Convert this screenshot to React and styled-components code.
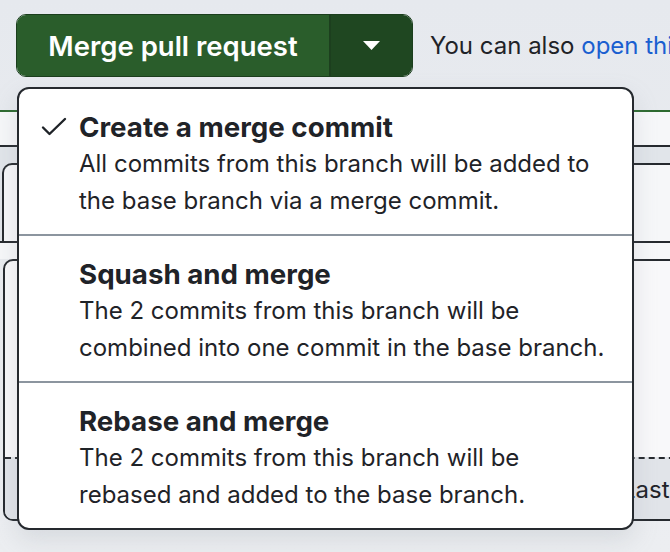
import React from 'react';
import styled, { createGlobalStyle } from 'styled-components';

const GlobalStyle = createGlobalStyle`
  html, body {
    margin: 0;
    padding: 0;
    background: #e7e9ed;
  }
  body {
    font-family: Inter, "Noto Sans", "Liberation Sans", sans-serif;
    color: #1f2328;
  }
`;

const Page = styled.div`
  position: relative;
  width: 670px;
  height: 552px;
  overflow: hidden;
  background: linear-gradient(180deg, #e6e9ee 0%, #eceef1 100%);
`;

const TopBar = styled.div`
  display: flex;
  align-items: center;
  gap: 17px;
  padding: 14px 0 0 16px;
  white-space: nowrap;
`;

const ButtonGroup = styled.div`
  display: flex;
  flex-shrink: 0;
  height: 63px;
  border: 1.5px solid #1b3e1d;
  border-radius: 10px;
  overflow: hidden;
  box-sizing: border-box;
`;

const MergeButton = styled.button`
  width: 314px;
  padding: 0;
  border: 0;
  border-right: 2px solid #1c3f1e;
  background: #2a5d2b;
  color: #ffffff;
  font-family: inherit;
  font-size: 27.5px;
  font-weight: 600;
`;

const CaretButton = styled.button`
  width: 81px;
  border: 0;
  background: #1f4721;
  display: flex;
  align-items: center;
  justify-content: center;
`;

const Hint = styled.span`
  font-size: 24px;
  color: #1f2328;
`;

const HintLink = styled.a`
  color: #1a5fd0;
  text-decoration: none;
`;

const MergeBox = styled.div`
  margin-top: 33px;
  border-top: 2px solid #2d6a30;
`;

const Strip = styled.div`
  height: 33px;
  background: #f6f7f9;
`;

const StatusBand = styled.div`
  height: 78px;
  background: #e1e5ea;
  border-top: 2px solid #25292e;
  border-bottom: 2px solid #25292e;
  padding-top: 16px;
`;

const InnerCard = styled.div`
  height: 100%;
  margin-left: 2px;
  border-left: 2px solid #25292e;
  border-top: 2px solid #25292e;
  border-top-left-radius: 10px;
  background: #f6f7f9;
  box-sizing: border-box;
`;

const Gap = styled.div`
  height: 16px;
  background: #f6f7f9;
`;

const OptionsCard = styled.div`
  margin-left: 3px;
  width: 700px;
  border: 2px solid #25292e;
  border-radius: 10px;
  overflow: hidden;
  background: #f8f8fa;
`;

const CardBody = styled.div`
  height: 196px;
`;

const CardFooter = styled.div`
  height: 60px;
  border-top: 2px dashed #25292e;
  background: #e1e4e9;
  display: flex;
  align-items: center;
  padding-left: 617px;
  font-size: 24px;
  white-space: nowrap;
`;

const Menu = styled.div`
  position: absolute;
  left: 17px;
  top: 87px;
  width: 617px;
  height: 443px;
  box-sizing: border-box;
  background: #ffffff;
  border: 2px solid #25292e;
  border-radius: 12px;
  box-shadow: 0 10px 24px rgba(140, 149, 159, 0.22);
  overflow: hidden;
`;

const Item = styled.div`
  display: grid;
  grid-template-columns: 26px 1fr;
  column-gap: 12px;
  padding: 21px 0 16px 22px;
  & + & {
    border-top: 2px solid #8c959f;
  }
`;

const Check = styled.div`
  height: 34px;
  display: flex;
  align-items: center;
`;

const Title = styled.div`
  font-size: 27.7px;
  line-height: 34px;
  font-weight: 700;
  color: #1f2328;
`;

const Desc = styled.div`
  grid-column: 2;
  font-size: 24px;
  line-height: 37px;
  color: #1f2328;
  white-space: nowrap;
  position: relative;
  top: 1px;
`;

const options = [
  {
    title: 'Create a merge commit',
    lines: ['All commits from this branch will be added to', 'the base branch via a merge commit.'],
    selected: true,
  },
  {
    title: 'Squash and merge',
    lines: ['The 2 commits from this branch will be', 'combined into one commit in the base branch.'],
  },
  {
    title: 'Rebase and merge',
    lines: ['The 2 commits from this branch will be', 'rebased and added to the base branch.'],
  },
];

function CheckIcon() {
  return (
    <svg width="26" height="22" viewBox="0 0 26 22">
      <path
        d="M2 11.5 L8.5 18 L24 3"
        fill="none"
        stroke="#1f2328"
        strokeWidth="2.4"
        strokeLinecap="round"
        strokeLinejoin="round"
      />
    </svg>
  );
}

export default function App() {
  return (
    <Page>
      <GlobalStyle />
      <TopBar>
        <ButtonGroup>
          <MergeButton>Merge pull request</MergeButton>
          <CaretButton aria-label="Select merge method">
            <svg width="17" height="9" viewBox="0 0 17 9">
              <path d="M0 0h17L8.5 9z" fill="#ffffff" />
            </svg>
          </CaretButton>
        </ButtonGroup>
        <Hint>
          You can also <HintLink href="#">open this in GitHub Desktop</HintLink> or view command line instructions.
        </Hint>
      </TopBar>

      <MergeBox>
        <Strip />
        <StatusBand>
          <InnerCard />
        </StatusBand>
        <Gap />
        <OptionsCard>
          <CardBody />
          <CardFooter>Last updated</CardFooter>
        </OptionsCard>
      </MergeBox>

      <Menu role="menu">
        {options.map((o) => (
          <Item key={o.title} role="menuitemradio" aria-checked={!!o.selected}>
            <Check>{o.selected && <CheckIcon />}</Check>
            <Title>{o.title}</Title>
            {o.lines.map((l) => (
              <Desc key={l}>{l}</Desc>
            ))}
          </Item>
        ))}
      </Menu>
    </Page>
  );
}
